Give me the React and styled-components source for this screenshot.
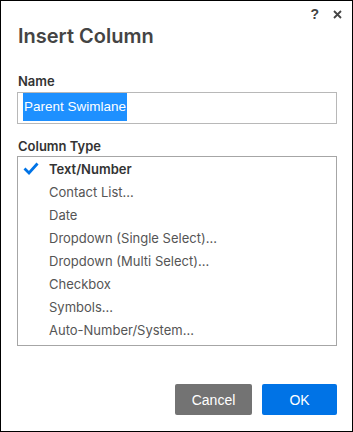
import React from "react";
import styled, { createGlobalStyle } from "styled-components";

const GlobalStyle = createGlobalStyle`
  html, body {
    margin: 0;
    padding: 0;
    background: #fff;
  }
  * {
    box-sizing: border-box;
  }
`;

const Dialog = styled.div`
  width: 353px;
  height: 432px;
  border: 1px solid #000;
  background: #fff;
  display: flex;
  flex-direction: column;
  padding: 0 15px 16px 16px;
  font-family: Inter, "Noto Sans", sans-serif;
  color: #333;
`;

const TopBar = styled.div`
  height: 23px;
  display: flex;
  justify-content: flex-end;
  align-items: flex-start;
  gap: 14px;
  padding-top: 5px;
  margin-right: -5px;
`;

const TopIcon = styled.span`
  font-family: "Liberation Sans", Arial, sans-serif;
  font-size: 14px;
  font-weight: 700;
  line-height: 16px;
  color: #444;
  cursor: pointer;
  display: flex;
  align-items: center;
  height: 16px;
`;

const Title = styled.h1`
  margin: 0 0 25px 1px;
  font-size: 20px;
  font-weight: 600;
  line-height: 24px;
  color: #444;
`;

const Label = styled.div`
  margin: 0 0 ${(p) => p.gap || 3}px 1px;
  font-size: 13px;
  font-weight: 600;
  line-height: 16px;
  color: #333;
`;

const NameBox = styled.div`
  height: 32px;
  border: 1px solid #b8b8b8;
  padding: 0 5px;
  margin-bottom: 14px;
  display: flex;
  align-items: flex-start;
`;

const Selected = styled.span`
  height: 28px;
  line-height: 28px;
  padding: 0 1px;
  background: #1e90ff;
  color: #fff;
  font-family: "Liberation Sans", Arial, sans-serif;
  font-size: 13.5px;
`;

const List = styled.ul`
  list-style: none;
  margin: 0;
  padding: 0 0 4px;
  height: 190px;
  border: 1px solid #a6a6a6;
`;

const Item = styled.li`
  display: flex;
  align-items: center;
  height: 23px;
  padding-left: 31px;
  position: relative;
  font-size: 13px;
  font-weight: ${(p) => (p.active ? 600 : 400)};
  color: ${(p) => (p.active ? "#333" : "#555")};
  cursor: default;
`;

const Check = styled.svg`
  position: absolute;
  left: 5px;
  top: 5px;
`;

const Footer = styled.div`
  margin-top: auto;
  display: flex;
  justify-content: flex-end;
  gap: 10px;
`;

const Button = styled.button`
  height: 31px;
  width: ${(p) => p.w}px;
  border: none;
  border-radius: 2px;
  background: ${(p) => (p.primary ? "#0073e6" : "#737373")};
  color: #fff;
  font-family: "Liberation Sans", Arial, sans-serif;
  font-size: 14px;
  cursor: pointer;
`;

const types = [
  "Text/Number",
  "Contact List...",
  "Date",
  "Dropdown (Single Select)...",
  "Dropdown (Multi Select)...",
  "Checkbox",
  "Symbols...",
  "Auto-Number/System...",
];

export default function App() {
  return (
    <>
      <GlobalStyle />
      <Dialog>
        <TopBar>
          <TopIcon>?</TopIcon>
          <TopIcon>
            <svg width="9" height="9" viewBox="0 0 9 9">
              <path d="M1 1L8 8M8 1L1 8" stroke="#444" strokeWidth="1.8" />
            </svg>
          </TopIcon>
        </TopBar>
        <Title>Insert Column</Title>
        <Label>Name</Label>
        <NameBox>
          <Selected>Parent Swimlane</Selected>
        </NameBox>
        <Label gap={2}>Column Type</Label>
        <List>
          {types.map((t, i) => (
            <Item key={t} active={i === 0}>
              {i === 0 && (
                <Check width="16" height="13" viewBox="0 0 16 13">
                  <path
                    d="M1.5 6.5L6 11L14.5 1.5"
                    fill="none"
                    stroke="#0073e6"
                    strokeWidth="2.8"
                  />
                </Check>
              )}
              {t}
            </Item>
          ))}
        </List>
        <Footer>
          <Button w={77}>Cancel</Button>
          <Button w={75} primary>
            OK
          </Button>
        </Footer>
      </Dialog>
    </>
  );
}
